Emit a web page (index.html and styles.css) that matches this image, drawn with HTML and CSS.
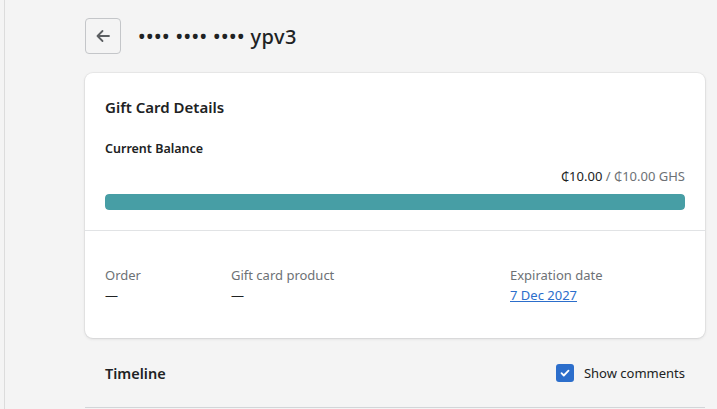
FILE: index.html
```html
<!DOCTYPE html>
<html>
<head>
  <title>Gift card ypv3</title>
  <link rel="stylesheet" href="styles.css">
</head>
<body>
  <div class="frame">
    <div class="page">
      <div class="title-bar">
        <button class="back-btn" aria-label="Back">
          <svg width="20" height="20" viewBox="0 0 20 20"><path d="M16 10H4.5M9.5 5l-5 5 5 5" fill="none" stroke="#5c5f62" stroke-width="1.8" stroke-linecap="round" stroke-linejoin="round"/></svg>
        </button>
        <h1>•••• •••• •••• ypv3</h1>
      </div>

      <div class="card">
        <div class="card-section">
          <h2>Gift Card Details</h2>
          <h3>Current Balance</h3>
          <div class="balance"><span class="balance-now">₵10.00</span> / ₵10.00 GHS</div>
          <div class="progress"><div class="progress-fill" style="width: 100%"></div></div>
        </div>
        <div class="card-section info">
          <div class="info-item">
            <div class="info-label">Order</div>
            <div class="info-value">—</div>
          </div>
          <div class="info-item">
            <div class="info-label">Gift card product</div>
            <div class="info-value">—</div>
          </div>
          <div class="info-item">
            <div class="info-label">Expiration date</div>
            <div class="info-value"><a href="#">7 Dec 2027</a></div>
          </div>
        </div>
      </div>

      <div class="timeline-head">
        <h2>Timeline</h2>
        <label class="check">
          <span class="check-box">
            <svg width="12" height="12" viewBox="0 0 12 12"><path d="M2.5 6.2l2.3 2.3 4.7-4.8" fill="none" stroke="#fff" stroke-width="1.8" stroke-linecap="round" stroke-linejoin="round"/></svg>
          </span>
          Show comments
        </label>
      </div>
    </div>
  </div>
</body>
</html>
```

FILE: styles.css
```css
body {
  margin: 0;
  font-family: "Noto Sans", "Open Sans", sans-serif;
  background-color: #f4f4f4;
  color: #202223;
}

.frame {
  margin-left: 4px;
  border-left: 1px solid #dcdcdc;
  height: 409px;
  overflow: hidden;
}

.page {
  width: 620px;
  margin-left: 80px;
}

.title-bar {
  display: flex;
  align-items: center;
  gap: 17px;
  padding-top: 18px;
  height: 36px;
  margin-bottom: 19px;
}

.back-btn {
  width: 36px;
  height: 36px;
  display: flex;
  align-items: center;
  justify-content: center;
  padding: 0;
  background: transparent;
  border: 1px solid #c4c6c9;
  border-radius: 4px;
}

h1 {
  margin: 0;
  font-size: 20px;
  font-weight: 500;
  letter-spacing: 0.45px;
}

.card {
  background: #fff;
  border-radius: 8px;
  box-shadow: 0 0 0 1px rgba(63, 63, 68, 0.05), 0 1px 3px rgba(63, 63, 68, 0.15);
}

.card-section {
  padding: 20px 20px 20px;
}

.card-section + .card-section {
  border-top: 1px solid #e1e3e5;
}

.card h2 {
  margin: 4px 0 0;
  font-size: 15px;
  font-weight: 600;
  line-height: 20px;
}

.card h3 {
  margin: 22px 0 0;
  font-size: 12.5px;
  font-weight: 600;
  line-height: 20px;
}

.balance {
  margin-top: 7px;
  text-align: right;
  font-size: 13px;
  line-height: 20px;
  color: #6d7175;
}

.balance-now {
  color: #202223;
}

.progress {
  margin-top: 8px;
  height: 16px;
  border-radius: 4px;
  background: #e4e5e7;
  overflow: hidden;
}

.progress-fill {
  height: 100%;
  background: #479ea5;
  border-radius: 4px;
}

.info {
  display: grid;
  grid-template-columns: 126px 279px 1fr;
  padding-top: 34px;
  padding-bottom: 33px;
}

.info-label {
  font-size: 13px;
  line-height: 20px;
  color: #6d7175;
}

.info-value {
  font-size: 13px;
  line-height: 20px;
}

.info-value a {
  color: #2c6ecb;
}

.timeline-head {
  display: flex;
  justify-content: space-between;
  align-items: center;
  padding: 25px 20px 24px;
  border-bottom: 1px solid #d2d5d8;
}

.timeline-head h2 {
  margin: 0;
  font-size: 14.5px;
  font-weight: 600;
  line-height: 20px;
}

.check {
  display: flex;
  align-items: center;
  gap: 10px;
  font-size: 13px;
  line-height: 20px;
}

.check-box {
  width: 18px;
  height: 18px;
  border-radius: 3px;
  background: #2c6ecb;
  display: flex;
  align-items: center;
  justify-content: center;
}
```
